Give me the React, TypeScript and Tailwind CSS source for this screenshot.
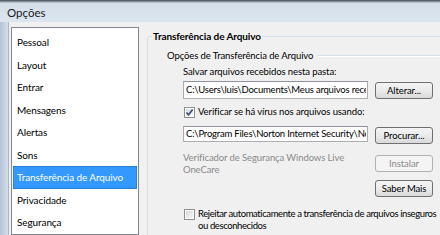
import React from 'react';

const items = [
  'Pessoal',
  'Layout',
  'Entrar',
  'Mensagens',
  'Alertas',
  'Sons',
  'Transferência de Arquivo',
  'Privacidade',
  'Segurança',
];

const Button: React.FC<{ label: string; disabled?: boolean }> = ({ label, disabled }) => (
  <div
    className={
      disabled
        ? 'w-[58px] h-[17px] shrink-0 flex items-center justify-center rounded-[3px] border border-[#adb2b5] bg-[#f4f4f4] text-[#8a8a8a]'
        : 'w-[58px] h-[17px] shrink-0 flex items-center justify-center rounded-[3px] border border-[#707070] bg-gradient-to-b from-[#f4f4f4] via-[#ebebeb] to-[#d9d9d9] text-black'
    }
  >
    {label}
  </div>
);

const CheckBox: React.FC<{ checked?: boolean }> = ({ checked }) => (
  <div className="w-[11px] h-[11px] shrink-0 border border-[#8e8f8f] bg-white p-[1px]">
    <div className="w-full h-full bg-gradient-to-br from-[#dcdcdc] to-[#f6f6f6] relative">
      {checked && (
        <svg viewBox="0 0 9 9" className="absolute -left-[1px] -top-[1px] w-[9px] h-[9px]">
          <path d="M1.5 4.5 L3.6 6.8 L7.6 1.6" fill="none" stroke="#334a7a" strokeWidth="1.6" />
        </svg>
      )}
    </div>
  </div>
);

const TextBox: React.FC<{ value: string; h: string }> = ({ value, h }) => (
  <div
    className={`w-[185px] ${h} shrink-0 border border-[#abadb3] border-t-[#8f949c] bg-white pl-[2px] flex items-center overflow-hidden`}
  >
    <span className="block w-[180px] overflow-hidden whitespace-nowrap tracking-[-0.2px]">{value}</span>
  </div>
);

export default function App() {
  return (
    <div
      className="w-[440px] h-[235px] overflow-hidden bg-[#f0f0f0] text-[9.5px] leading-[12px] tracking-[-0.1px] text-black"
      style={{ fontFamily: 'Lato, "Open Sans", sans-serif' }}
    >
      {/* title bar */}
      <div className="h-[22px] bg-gradient-to-b from-[#3d4a57] via-[#d3dee9] via-[14%] to-[#dce6f0] flex items-center pl-[7px] pt-[3px]">
        <span className="text-[11.5px] tracking-normal text-[#1b1b1b]">Opções</span>
      </div>

      <div className="flex h-[213px]">
        {/* window frame */}
        <div className="w-[9px] shrink-0 bg-gradient-to-r from-[#b3c3d6] to-[#d4dfea] border-r border-[#aab6c3]" />

        {/* client */}
        <div className="flex flex-1 pt-[5px]">
          {/* list */}
          <div className="ml-[2px] w-[128px] shrink-0 border border-[#828790] bg-white pt-[3px] px-[1px] text-[10px]">
            {items.map((it) => {
              const sel = it === 'Transferência de Arquivo';
              return (
                <div
                  key={it}
                  className={
                    sel
                      ? 'h-[22.5px] flex items-center pl-[3px] bg-[#3399ff] text-white border border-[#2a80d8]'
                      : 'h-[22.5px] flex items-center pl-[4px] text-black'
                  }
                >
                  {it}
                </div>
              );
            })}
          </div>

          {/* right panel */}
          <fieldset className="ml-[8px] w-[320px] shrink-0 border border-[#d5dfe5] rounded-[3px] pl-[4px] mt-[3px] h-[240px]">
            <legend className="px-[1px] font-bold leading-[12px] text-[10px]">Transferência de Arquivo</legend>

            <div className="pl-[15px]">
              <div className="mt-[8px] h-[12px] flex items-center">
                <span>Opções de Transferência de Arquivo</span>
                <div className="flex-1 ml-[5px] h-[2px] border-t border-[#d5dfe5] border-b-white border-b" />
              </div>

              <div className="pl-[16px]">
                <div className="mt-[4px] h-[12px]">Salvar arquivos recebidos nesta pasta:</div>

                <div className="mt-[3px] flex items-start gap-[7px]">
                  <TextBox h="h-[18px]" value="C:\Users\luis\Documents\Meus arquivos recet" />
                  <div className="mt-[1px]">
                    <Button label="Alterar..." />
                  </div>
                </div>

                <div className="mt-[7px] h-[12px] flex items-center gap-[3px] pl-[1px]">
                  <CheckBox checked />
                  <span>Verificar se há vírus nos arquivos usando:</span>
                </div>

                <div className="mt-[8px] flex items-start gap-[7px]">
                  <TextBox h="h-[16px]" value="C:\Program Files\Norton Internet Security\Norto" />
                  <div className="mt-[1px]">
                    <Button label="Procurar..." />
                  </div>
                </div>

                <div className="mt-[8px] flex items-start gap-[7px]">
                  <div className="w-[185px] text-[#8a8a8a]">
                    <div>Verificador de Segurança Windows Live</div>
                    <div>OneCare</div>
                  </div>
                  <div className="pt-[3px] flex flex-col gap-[8px]">
                    <Button label="Instalar" disabled />
                    <Button label="Saber Mais" />
                  </div>
                </div>

                <div className="mt-[11px] flex items-start gap-[3px] pl-[1px]">
                  <div className="mt-[1px]">
                    <CheckBox />
                  </div>
                  <div className="tracking-[-0.4px]">
                    <div className="whitespace-nowrap">Rejeitar automaticamente a transferência de arquivos inseguros</div>
                    <div>ou desconhecidos</div>
                  </div>
                </div>
              </div>
            </div>
          </fieldset>
        </div>
      </div>
    </div>
  );
}
